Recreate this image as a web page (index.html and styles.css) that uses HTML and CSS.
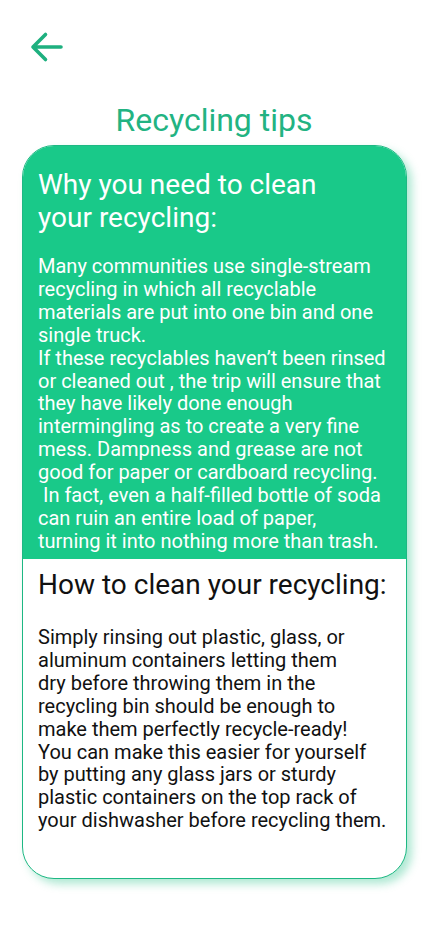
FILE: index.html
```html
<!DOCTYPE html>
<html lang="en">
<head>
<meta charset="utf-8">
<meta name="viewport" content="width=device-width, initial-scale=1">
<title>Recycling tips</title>
<link rel="stylesheet" href="styles.css">
</head>
<body>
<div class="screen">
  <header class="topbar">
    <button class="back" aria-label="Back">
      <svg width="34" height="34" viewBox="0 0 34 34" fill="none" stroke="currentColor" stroke-width="3.6" stroke-linecap="round" stroke-linejoin="round">
        <path d="M31 16H3M15.5 3.5L3 16l12.5 12.5"/>
      </svg>
    </button>
  </header>
  <h1 class="title">Recycling tips</h1>
  <article class="card">
    <section class="why">
      <h2 class="heading">Why you need to clean<br>your recycling:</h2>
      <p class="text">Many communities use single-stream<br>recycling in which all recyclable<br>materials are put into one bin and one<br>single truck.<br>If these recyclables haven’t been rinsed<br>or cleaned out , the trip will ensure that<br>they have likely done enough<br>intermingling as to create a very fine<br>mess. Dampness and grease are not<br>good for paper or cardboard recycling.<br>&nbsp;In fact, even a half-filled bottle of soda<br>can ruin an entire load of paper,<br>turning it into nothing more than trash.</p>
    </section>
    <section class="how">
      <h2 class="heading">How to clean your recycling:</h2>
      <p class="text">Simply rinsing out plastic, glass, or<br>aluminum containers letting them<br>dry before throwing them in the<br>recycling bin should be enough to<br>make them perfectly recycle-ready!<br>You can make this easier for yourself<br>by putting any glass jars or sturdy<br>plastic containers on the top rack of<br>your dishwasher before recycling them.</p>
    </section>
  </article>
</div>
</body>
</html>
```
FILE: styles.css
```css
* { box-sizing: border-box; }
html, body { margin: 0; padding: 0; background: #fff; }
body {
  font-family: Roboto, "Noto Sans", "Liberation Sans", sans-serif;
  width: 428px;
  min-height: 926px;
}
.screen {
  display: flex;
  flex-direction: column;
  padding: 31px 0 0 0;
}
.topbar {
  padding-left: 30px;
  height: 34px;
  display: flex;
  align-items: center;
}
.back {
  border: 0;
  background: none;
  padding: 0;
  color: #1eb07f;
  display: flex;
  cursor: pointer;
}
.title {
  margin: 36px 0 0 0;
  text-align: center;
  font-weight: 400;
  font-size: 32px;
  line-height: 38px;
  color: #22b382;
}
.card {
  margin: 6px 0 0 22px;
  width: 385px;
  border: 1px solid #1db883;
  border-radius: 32px;
  overflow: hidden;
  background: #fff;
  box-shadow: 5px 5px 9px rgba(26, 190, 130, 0.35);
}
.why {
  background: #19c989;
  color: #fff;
  padding: 22px 6px 0 15px;
  height: 413px;
}
.how {
  color: #111;
  padding: 9px 6px 46px 15px;
}
.heading {
  margin: 0;
  font-weight: 400;
  font-size: 28px;
  line-height: 33px;
  white-space: nowrap;
}
.text {
  margin: 0;
  font-size: 20px;
  line-height: 22.9px;
  white-space: nowrap;
}
.why .text { margin-top: 21px; }
.how .text { margin-top: 25px; }
```
